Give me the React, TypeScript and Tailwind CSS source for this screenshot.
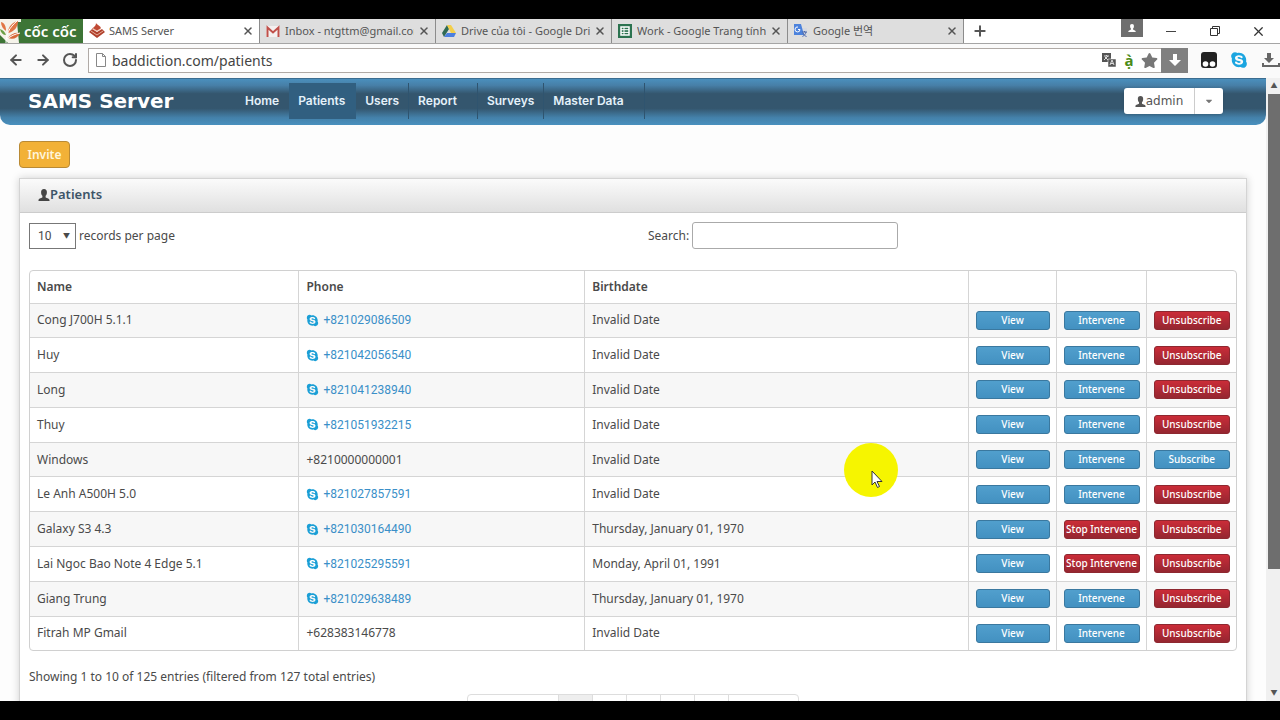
import React from 'react';
import clsx from 'clsx';
import { FaCaretDown, FaSkype, FaStar } from 'react-icons/fa';
import { ArrowLeft, ArrowRight, Plus, RotateCw, X } from 'lucide-react';

const tabs = [
    { title: 'SAMS Server', icon: <SamsIcon />, active: true },
    { title: 'Inbox - ntgttm@gmail.com', icon: <GmailIcon /> },
    { title: 'Drive của tôi - Google Drive', icon: <DriveIcon /> },
    { title: 'Work - Google Trang tính', icon: <SheetsIcon /> },
    { title: 'Google 번역', icon: <TranslateIcon /> },
];

const navItems = [
    { label: 'Home', className: 'pl-[9px] pr-[10px]' },
    { label: 'Patients', className: 'pl-[9px] pr-[11px]', active: true },
    { label: 'Users', className: 'px-[9px] border-r' },
    { label: 'Report', className: 'pl-[9px] pr-5 border-r' },
    { label: 'Surveys', className: 'px-[9px] border-r' },
    { label: 'Master Data', className: 'pl-[9px] pr-5 border-r' },
];

const patients = [
    { name: 'Cong J700H 5.1.1', phone: '+821029086509', birthdate: 'Invalid Date' },
    { name: 'Huy', phone: '+821042056540', birthdate: 'Invalid Date' },
    { name: 'Long', phone: '+821041238940', birthdate: 'Invalid Date' },
    { name: 'Thuy', phone: '+821051932215', birthdate: 'Invalid Date' },
    { name: 'Windows', phone: '+8210000000001', birthdate: 'Invalid Date', noSkype: true, unsubscribed: true },
    { name: 'Le Anh A500H 5.0', phone: '+821027857591', birthdate: 'Invalid Date' },
    { name: 'Galaxy S3 4.3', phone: '+821030164490', birthdate: 'Thursday, January 01, 1970', intervening: true },
    { name: 'Lai Ngoc Bao Note 4 Edge 5.1', phone: '+821025295591', birthdate: 'Monday, April 01, 1991', intervening: true },
    { name: 'Giang Trung', phone: '+821029638489', birthdate: 'Thursday, January 01, 1970' },
    { name: 'Fitrah MP Gmail', phone: '+628383146778', birthdate: 'Invalid Date', noSkype: true },
];

function SamsIcon() {
    return (
        <svg viewBox="0 0 16 16" className="h-4 w-4 shrink-0">
            <path d="M7 0c1 2 5 3 5 5.500L8 8 3 5.500C5 4 7 3 7 0z" fill="#c04a35" />
            <path d="M3 6 8 9l5-3 3 3-8 6-8-6z" fill="#b0402c" />
            <path d="M2 8l6 4 6-4M4 5.500 8 8l4-2.500" fill="none" stroke="#f3c9b4" strokeWidth=".800" />
        </svg>
    );
}

function GmailIcon() {
    return (
        <svg viewBox="0 0 16 16" className="h-4 w-4 shrink-0">
            <path d="M1 3h14v11H1z" fill="#f4f0f0" />
            <path d="M2.500 14V4.500L8 9.500l5.500-5V14" fill="none" stroke="#c0504a" strokeWidth="2" />
        </svg>
    );
}

function DriveIcon() {
    return (
        <svg viewBox="0 0 16 16" className="h-4 w-4 shrink-0">
            <path d="M6 2 1 10l2 4 5-8z" fill="#2f6a54" />
            <path d="M6 2h4l5 8h-5z" fill="#f3cf4a" />
            <path d="M6 10h9l-2 4H3z" fill="#4b7fe0" />
        </svg>
    );
}

function SheetsIcon() {
    return (
        <svg viewBox="0 0 16 16" className="h-4 w-4 shrink-0">
            <path d="M1 1h14v14H1z" fill="#2c7350" />
            <path d="M4 4h8v8H4z" fill="#2c7350" stroke="#fff" strokeWidth="1.500" />
            <path d="M4 6.700h8M4 9.400h8M7 4v8" stroke="#fff" />
        </svg>
    );
}

function TranslateIcon() {
    return (
        <svg viewBox="0 0 16 16" className="h-4 w-4 shrink-0">
            <path d="M7 5h7v9H9z" fill="#d5d9e2" />
            <path d="M1 1h7l3 11H1z" fill="#4c82dc" />
            <path d="M7 6.500A2.500 2.500 0 1 1 5 4M7 6.500H5" fill="none" stroke="#fff" />
            <path d="M9 9h5M11.500 8v1M13 9c-.500 2-2 4-3.500 4.500M10 10c1 2 2 3 3.500 3.500" fill="none" stroke="#4b66a8" />
        </svg>
    );
}

function UserIcon({ className }: { className: string }) {
    return (
        <svg viewBox="0 0 12 12" className={clsx('shrink-0', className)} fill="currentColor">
            <path d="M6 0c2 0 3 1.300 2.900 3.200 0 1.700-.500 2.800-1.300 3.600v1.500c0 .600 3.900 1.200 3.900 2.700v1H.500v-1c0-1.500 3.900-2.100 3.900-2.700V6.800C3.600 6 3.100 4.900 3.100 3.200 3 1.300 4 0 6 0z" />
        </svg>
    );
}

function TabBar() {
    return (
        <div className="flex h-[25px] shrink-0 items-stretch border-b border-[#a5a5a5] bg-white">
            <div className="flex w-[84px] shrink-0 items-center border-r border-white bg-[#3d7536] text-white">
                <svg viewBox="0 0 22 24" className="h-6 w-[22px] shrink-0">
                    <path d="M0 0h21v24H0z" fill="#f5f3ea" />
                    <path d="M17 3h5v21h-3zM0 16l8 8H0z" fill="#3d7536" />
                    <path d="M1 3c4 1 5 5 5 9C3 10 1 7 1 3z" fill="#e17645" />
                    <path d="M0 10c3 1 5 3 6 6-3 0-5-2-6-6z" fill="#6ca046" />
                    <path d="M8 14C8 8 12 3 18 2c0 6-4 11-10 12z" fill="#e17645" />
                    <path d="M8 19c3-4 7-6 12-5-2 5-7 7-12 5z" fill="#d9683a" />
                    <path d="M6 24c0-9 3-15 11-22M7 20c4-3 8-5 13-6" fill="none" stroke="#fff" />
                </svg>
                <span className="ml-[2px] text-[15px] leading-6 font-semibold whitespace-nowrap">cốc cốc</span>
            </div>
            <div className="flex min-w-0 flex-1">
                {tabs.map((tab) => (
                    <div
                        key={tab.title}
                        className={clsx(
                            'flex w-[176px] min-w-0 items-center gap-1 border-r border-[#8c8c8c] pr-[5px] pl-[5px]',
                            tab.active ? 'bg-white' : 'bg-[#dedede]',
                        )}
                    >
                        {tab.icon}
                        <span className="min-w-0 flex-1 overflow-hidden text-[11px] whitespace-nowrap text-[#555]">{tab.title}</span>
                        <button aria-label="Close tab" className="text-[#555]">
                            <X size={12} strokeWidth={3} />
                        </button>
                    </div>
                ))}
                <button aria-label="New tab" className="ml-2 text-[#555]">
                    <Plus size={16} strokeWidth={3} />
                </button>
            </div>
            <div className="flex shrink-0 items-center">
                <div className="mr-[23px] flex h-[18px] w-[22px] items-center justify-center self-start bg-[#6e6e6e] text-white">
                    <UserIcon className="h-2 w-2" />
                </div>
                <button aria-label="Minimize" className="mr-[31px] flex h-[14px] w-3 items-center">
                    <span className="h-px w-[10px] bg-[#444]" />
                </button>
                <button aria-label="Restore" className="mr-[30px]">
                    <svg viewBox="0 0 12 12" className="h-3 w-3" fill="none" stroke="#333">
                        <path d="M1.500 3.500h7v7h-7zM3.500 3.500v-2h7v7h-2" />
                    </svg>
                </button>
                <button aria-label="Close" className="mr-[14px] text-[#333]">
                    <X size={15} strokeWidth={2} />
                </button>
            </div>
        </div>
    );
}

function AddressBar() {
    return (
        <div className="flex h-[34px] shrink-0 items-center bg-[#fafafa] pb-[2px] pl-2">
            <div className="flex w-20 shrink-0 gap-[11px] text-[#555]">
                <button aria-label="Back"><ArrowLeft size={16} strokeWidth={3} /></button>
                <button aria-label="Forward"><ArrowRight size={16} strokeWidth={3} /></button>
                <button aria-label="Reload"><RotateCw size={16} strokeWidth={3} /></button>
            </div>
            <div className="flex h-[25px] min-w-0 flex-1 items-center border border-r-0 border-[#b0aaa6] bg-white pl-[6px]">
                <svg viewBox="0 0 12 14" className="mr-[5px] h-[14px] w-3 shrink-0" fill="#fff" stroke="#888">
                    <path d="M1.500.500h6l3 3v10h-9zM7.500.500v3h3" />
                </svg>
                <input
                    aria-label="Address"
                    defaultValue="baddiction.com/patients"
                    className="min-w-0 flex-1 text-[14px] text-[#444] outline-none"
                />
                <svg viewBox="0 0 16 16" className="mr-1 h-4 w-4 shrink-0">
                    <path d="M1 1h9v9H1z" fill="#555" />
                    <path d="M7 7h8v8H7z" fill="#555" stroke="#fff" strokeWidth=".500" />
                    <path d="M3 4h5M5.500 3v1M7 4 3 8M4 5l3 3M9 13l2-5 2 5M10 11.500h2" fill="none" stroke="#ddd" />
                </svg>
                <span className="mr-1 w-4 text-center text-[15px] font-bold text-[#4b8b17]">ạ̀</span>
                <FaStar size={17} color="#777" className="mr-[3px] shrink-0" />
            </div>
            <button aria-label="Save" className="flex h-[25px] w-[27px] shrink-0 items-center justify-center bg-[#808080]">
                <svg viewBox="0 0 12 12" className="h-3 w-3" fill="#fff">
                    <path d="M4 0h4v6h4l-6 6-6-6h4z" />
                </svg>
            </button>
            <svg viewBox="0 0 16 16" className="ml-[13px] h-4 w-4 shrink-0">
                <rect width="16" height="16" rx="3" fill="#222" />
                <circle cx="4.500" cy="12" r="2.800" fill="#fff" />
                <circle cx="11.500" cy="12" r="2.800" fill="#fff" />
            </svg>
            <FaSkype size={18} color="#1ba5e0" className="ml-[13px] shrink-0" />
            <svg viewBox="0 0 18 16" className="ml-[14px] h-4 w-[18px] shrink-0" fill="#666">
                <path d="M5 1h4v5h3l-5 5-5-5h3zM0 11h2v2h14v-2h2v4H0z" />
            </svg>
        </div>
    );
}

function Header() {
    return (
        <header className="flex h-[47px] items-center rounded-b-[10px] border-t border-[#3c6d90] bg-[linear-gradient(#4a8fbd_0%,#477fa7_14%,#34566e_32%,#34566e_64%,#4481aa_84%,#4990be_100%)] pb-[2px] text-white">
            <h1 className="w-[207px] pl-7 text-[20px] leading-6 font-bold whitespace-nowrap font-['DejaVu_Sans',sans-serif]">SAMS Server</h1>
            <nav className="ml-[29px] flex flex-1">
                {navItems.map((item) => (
                    <a
                        key={item.label}
                        href="#"
                        className={clsx(
                            'border-[#2f546f] text-xs leading-9 font-semibold whitespace-nowrap text-[#e4f1fa] font-[Inter,sans-serif]',
                            item.className,
                            item.active && 'bg-[#315f80]',
                        )}
                    >
                        {item.label}
                    </a>
                ))}
            </nav>
            <div className="mr-[43px] flex h-[26px] rounded-[3px] bg-white text-xs text-[#555] shadow-sm font-['DejaVu_Sans',sans-serif]">
                <button className="flex w-[71px] items-center justify-center border-r border-[#ccc]">
                    <UserIcon className="h-[11px] w-[11px]" />
                    admin
                </button>
                <button aria-label="Account menu" className="flex w-7 items-center justify-center text-[#777]">
                    <FaCaretDown size={10} />
                </button>
            </div>
        </header>
    );
}

function ActionButton({ label, danger }: { label: string; danger?: boolean }) {
    return (
        <button
            className={clsx(
                'block h-[19px] w-full rounded-[3px] border text-[10px] leading-[17px] font-medium whitespace-nowrap text-white',
                danger
                    ? 'border-[#8e2830] bg-linear-to-b from-[#cb2c38] to-[#952630]'
                    : 'border-[#3a789f] bg-linear-to-b from-[#519fcd] to-[#4391c1]',
            )}
        >
            {label}
        </button>
    );
}

function PatientsTable() {
    return (
        <div className="rounded-[4px] border border-[#d0d0d0]">
            <table className="h-[379px] w-full table-fixed border-collapse text-left">
                <thead>
                    <tr className="h-8">
                        <th className="w-[22.3%] px-[7px] font-semibold">Name</th>
                        <th className="w-[23.7%] border-l border-[#d5d5d5] px-[7px] font-semibold">Phone</th>
                        <th className="border-l border-[#d5d5d5] px-[7px] font-semibold">Birthdate</th>
                        <th className="w-[88px] border-l border-[#d5d5d5]" />
                        <th className="w-[90px] border-l border-[#d5d5d5]" />
                        <th className="w-[90px] border-l border-[#d5d5d5]" />
                    </tr>
                </thead>
                <tbody>
                    {patients.map((p) => (
                        <tr key={p.name} className="border-t border-[#d5d5d5] odd:bg-[#f7f7f7]">
                            <td className="px-[7px]">{p.name}</td>
                            <td className="border-l border-[#d5d5d5] px-[7px]">
                                {p.noSkype ? (
                                    p.phone
                                ) : (
                                    <a href="#" className="flex items-center gap-1 text-[#3a8fc8] font-[Roboto,sans-serif]">
                                        <FaSkype size={13} color="#1b9fd6" />
                                        {p.phone}
                                    </a>
                                )}
                            </td>
                            <td className="border-l border-[#d5d5d5] px-[7px]">{p.birthdate}</td>
                            <td className="border-l border-[#d5d5d5] pr-[6px] pl-[7px]">
                                <ActionButton label="View" />
                            </td>
                            <td className="border-l border-[#d5d5d5] pr-[6px] pl-[7px]">
                                <ActionButton label={p.intervening ? 'Stop Intervene' : 'Intervene'} danger={p.intervening} />
                            </td>
                            <td className="border-l border-[#d5d5d5] pr-[6px] pl-[7px]">
                                <ActionButton label={p.unsubscribed ? 'Subscribe' : 'Unsubscribe'} danger={!p.unsubscribed} />
                            </td>
                        </tr>
                    ))}
                </tbody>
            </table>
        </div>
    );
}

function Pagination() {
    return (
        <nav aria-label="Pagination" className="mx-auto mt-[7px] flex h-8 w-[332px] rounded-[4px] border border-[#ddd]">
            <button aria-label="Previous" className="w-[90px]" />
            {[1, 2, 3, 4, 5].map((page) => (
                <button
                    key={page}
                    aria-label={`Page ${page}`}
                    className={clsx('w-[34px] border-l border-[#ddd]', page === 1 && 'bg-[#eee]')}
                />
            ))}
            <button aria-label="Next" className="flex-1 border-l border-[#ddd]" />
        </nav>
    );
}

function PatientsPanel() {
    return (
        <section className="mt-[10px] mr-[19px] ml-[19px] border border-[#d4d4d4] bg-white pb-10 shadow-[0_0_8px_rgba(0,0,0,0.18)]">
            <h2 className="flex h-[34px] items-center border-b border-[#ccc] bg-linear-to-b from-[#fbfbfb] to-[#e0e0e0] pb-[2px] pl-[18px] text-[13px] font-semibold text-[#3d5568]">
                <UserIcon className="h-3 w-3 text-[#444]" />
                Patients
            </h2>
            <div className="px-[9px] pt-[9px]">
                <div className="grid grid-cols-2 gap-[30px]">
                    <label className="flex items-center gap-[3px]">
                        <span className="relative flex items-center">
                            <select className="h-[26px] w-[47px] appearance-none border border-[#777] bg-white pl-2 font-[Roboto,sans-serif]">
                                <option>10</option>
                            </select>
                            <span className="pointer-events-none absolute right-[6px] text-[7px]">▼</span>
                        </span>
                        records per page
                    </label>
                    <label className="flex items-center gap-[3px]">
                        Search:
                        <input type="text" className="h-[27px] w-[206px] rounded-[3px] border border-[#aaa] bg-white px-2 outline-none" />
                    </label>
                </div>
                <div className="mt-[21px]">
                    <PatientsTable />
                </div>
                <p className="mt-4 leading-5">Showing 1 to 10 of 125 entries (filtered from 127 total entries)</p>
                <Pagination />
            </div>
        </section>
    );
}

function Scrollbar() {
    return (
        <div className="flex w-[14px] shrink-0 flex-col items-center bg-[#f0f0f0] pl-[2px] text-[7px] leading-4 text-[#555]">
            <span className="h-4">▲</span>
            <div className="h-[475px] w-full bg-[#6e6e6e]" />
            <span className="mt-auto h-4">▼</span>
        </div>
    );
}

function MousePointer() {
    return (
        <div className="pointer-events-none absolute top-[365px] left-[844px] h-[54px] w-[54px] rounded-full bg-[#f6f500]">
            <svg viewBox="0 0 12 19" className="absolute top-[27px] left-[27px] h-[19px] w-3">
                <path d="M1 1v14l3-3 2.500 5.500 2-1L6 11.500h5z" fill="#fff" stroke="#333" />
            </svg>
        </div>
    );
}

export default function App() {
    return (
        <div className="flex h-screen flex-col overflow-hidden bg-black font-['Noto_Sans','Noto_Sans_CJK_KR',sans-serif]">
            <div className="mt-[19px] mb-[19px] flex min-h-0 flex-1 flex-col bg-white">
                <TabBar />
                <AddressBar />
                <div className="flex min-h-0 flex-1">
                    <main className="relative min-w-0 flex-1 overflow-hidden bg-[#fdfdfd] text-xs text-[#4a4a4a]">
                        <Header />
                        <button className="mt-4 ml-[19px] block h-[27px] w-[51px] rounded-[4px] border border-[#b98a35] bg-[#f2b137] font-semibold text-[#fff6dc]">
                            Invite
                        </button>
                        <PatientsPanel />
                        <MousePointer />
                    </main>
                    <Scrollbar />
                </div>
            </div>
        </div>
    );
}
